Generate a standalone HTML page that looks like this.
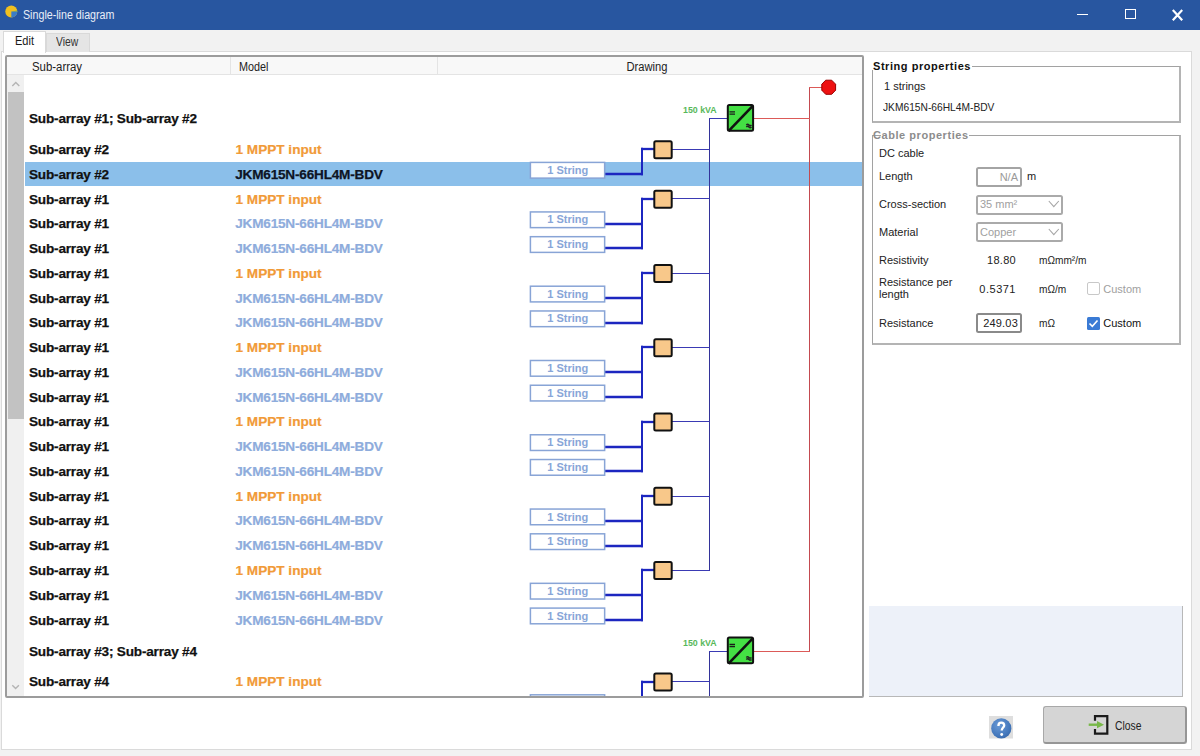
<!DOCTYPE html><html><head><meta charset="utf-8"><style>
html,body{margin:0;padding:0;}
body{width:1200px;height:756px;overflow:hidden;background:#f2f2f2;position:relative;font-family:"Liberation Sans", sans-serif;}
.t{position:absolute;white-space:nowrap;}
.a{position:absolute;box-sizing:border-box;}
</style></head><body>
<div class="a" style="left:0;top:0;width:1200px;height:30px;background:#2856a0;"></div>
<svg class="a" style="left:0;top:0" width="24" height="24" viewBox="0 0 24 24">
<circle cx="11.3" cy="11.5" r="6" fill="#f0c020"/>
<path d="M11.3 11.5 L17.3 11.5 A6 6 0 0 1 11.3 17.5 Z" fill="#3a7cc8"/>
<path d="M11.3 11.5 L17.3 10.5 L17.3 11.5 Z" fill="#5aa070"/>
</svg>
<div class="t" style="left:23.00px;top:9.24px;font-size:12px;line-height:12px;color:#e8eef8;font-weight:normal;transform:scaleX(0.89);transform-origin:0 0;">Single-line diagram</div>
<div class="a" style="left:1077px;top:14px;width:11px;height:1px;background:#fff;"></div>
<div class="a" style="left:1125px;top:9.3px;width:10.8px;height:10.2px;border:1.2px solid #fff;"></div>
<svg class="a" style="left:1170px;top:7px" width="16" height="16" viewBox="0 0 16 16"><path d="M2.8 3 L12.2 13.2 M12.2 3 L2.8 13.2" stroke="#fff" stroke-width="2.2"/></svg>
<div class="a" style="left:1px;top:51px;width:1191px;height:699px;background:#fff;border:1px solid #dadada;"></div>
<div class="a" style="left:46px;top:33px;width:44px;height:19px;background:#e5e5e5;border:1px solid #d9d9d9;border-bottom:none;"></div>
<div class="a" style="left:3px;top:31px;width:43px;height:22px;background:#fff;border:1px solid #d9d9d9;border-bottom:none;"></div>
<div class="t" style="left:14.80px;top:34.84px;font-size:12px;line-height:12px;color:#1a1a1a;font-weight:normal;transform:scaleX(0.92);transform-origin:0 0;">Edit</div>
<div class="t" style="left:56.20px;top:35.64px;font-size:12px;line-height:12px;color:#333;font-weight:normal;transform:scaleX(0.86);transform-origin:0 0;">View</div>
<div class="a" style="left:5px;top:55px;width:859px;height:643px;border:2px solid #9c9c9c;border-radius:2px;background:#fff;"></div>
<div class="a" style="left:7px;top:57px;width:855px;height:18px;background:#f8f8f8;border-bottom:1px solid #e4e4e4;"></div>
<div class="a" style="left:230px;top:57px;width:1px;height:17px;background:#e4e4e4;"></div>
<div class="a" style="left:437px;top:57px;width:1px;height:17px;background:#e4e4e4;"></div>
<div class="t" style="left:32.20px;top:61.04px;font-size:12px;line-height:12px;color:#222;font-weight:normal;transform:scaleX(0.95);transform-origin:0 0;">Sub-array</div>
<div class="t" style="left:238.60px;top:61.04px;font-size:12px;line-height:12px;color:#222;font-weight:normal;transform:scaleX(0.9);transform-origin:0 0;">Model</div>
<div class="t" style="left:446.60px;width:400px;text-align:center;top:61.04px;font-size:12px;line-height:12px;color:#222;font-weight:normal;transform:scaleX(0.93);transform-origin:200px 0;">Drawing</div>
<div class="a" style="left:7px;top:75px;width:17px;height:621px;background:#f0f0f0;"></div>
<div class="a" style="left:8px;top:92px;width:16px;height:327px;background:#c2c2c2;"></div>
<svg class="a" style="left:0px;top:0px" width="30" height="756"><path d="M12.3 86 L15.8 82.6 L19.3 86" stroke="#b4b4b4" stroke-width="1.4" fill="none"/><path d="M12.3 685.2 L15.6 688.6 L18.9 685.2" stroke="#b4b4b4" stroke-width="1.4" fill="none"/></svg>
<div class="a" style="left:25px;top:162px;width:837px;height:24px;background:#8bbfea;"></div>
<div class="t" style="left:29.00px;top:112.39px;font-size:13.6px;line-height:13.6px;color:#111;font-weight:bold;letter-spacing:-0.2px;-webkit-text-stroke:0.25px #111;">Sub-array #1; Sub-array #2</div>
<div class="t" style="left:29.00px;top:143.09px;font-size:13.6px;line-height:13.6px;color:#111;font-weight:bold;letter-spacing:-0.2px;-webkit-text-stroke:0.25px #111;">Sub-array #2</div>
<div class="t" style="left:235.50px;top:143.09px;font-size:13.6px;line-height:13.6px;color:#f19a38;font-weight:bold;letter-spacing:0px;-webkit-text-stroke:0.2px #f19a38;">1 MPPT input</div>
<div class="t" style="left:29.00px;top:167.85px;font-size:13.6px;line-height:13.6px;color:#111;font-weight:bold;letter-spacing:-0.2px;-webkit-text-stroke:0.25px #111;">Sub-array #2</div>
<div class="t" style="left:235.20px;top:167.85px;font-size:13.6px;line-height:13.6px;color:#0d1424;font-weight:bold;letter-spacing:-0.2px;-webkit-text-stroke:0.25px #0d1424;">JKM615N-66HL4M-BDV</div>
<div class="t" style="left:29.00px;top:192.61px;font-size:13.6px;line-height:13.6px;color:#111;font-weight:bold;letter-spacing:-0.2px;-webkit-text-stroke:0.25px #111;">Sub-array #1</div>
<div class="t" style="left:235.50px;top:192.61px;font-size:13.6px;line-height:13.6px;color:#f19a38;font-weight:bold;letter-spacing:0px;-webkit-text-stroke:0.2px #f19a38;">1 MPPT input</div>
<div class="t" style="left:29.00px;top:217.37px;font-size:13.6px;line-height:13.6px;color:#111;font-weight:bold;letter-spacing:-0.2px;-webkit-text-stroke:0.25px #111;">Sub-array #1</div>
<div class="t" style="left:235.20px;top:217.37px;font-size:13.6px;line-height:13.6px;color:#8eacdc;font-weight:bold;letter-spacing:-0.2px;-webkit-text-stroke:0.2px #8eacdc;">JKM615N-66HL4M-BDV</div>
<div class="t" style="left:29.00px;top:242.13px;font-size:13.6px;line-height:13.6px;color:#111;font-weight:bold;letter-spacing:-0.2px;-webkit-text-stroke:0.25px #111;">Sub-array #1</div>
<div class="t" style="left:235.20px;top:242.13px;font-size:13.6px;line-height:13.6px;color:#8eacdc;font-weight:bold;letter-spacing:-0.2px;-webkit-text-stroke:0.2px #8eacdc;">JKM615N-66HL4M-BDV</div>
<div class="t" style="left:29.00px;top:266.89px;font-size:13.6px;line-height:13.6px;color:#111;font-weight:bold;letter-spacing:-0.2px;-webkit-text-stroke:0.25px #111;">Sub-array #1</div>
<div class="t" style="left:235.50px;top:266.89px;font-size:13.6px;line-height:13.6px;color:#f19a38;font-weight:bold;letter-spacing:0px;-webkit-text-stroke:0.2px #f19a38;">1 MPPT input</div>
<div class="t" style="left:29.00px;top:291.65px;font-size:13.6px;line-height:13.6px;color:#111;font-weight:bold;letter-spacing:-0.2px;-webkit-text-stroke:0.25px #111;">Sub-array #1</div>
<div class="t" style="left:235.20px;top:291.65px;font-size:13.6px;line-height:13.6px;color:#8eacdc;font-weight:bold;letter-spacing:-0.2px;-webkit-text-stroke:0.2px #8eacdc;">JKM615N-66HL4M-BDV</div>
<div class="t" style="left:29.00px;top:316.41px;font-size:13.6px;line-height:13.6px;color:#111;font-weight:bold;letter-spacing:-0.2px;-webkit-text-stroke:0.25px #111;">Sub-array #1</div>
<div class="t" style="left:235.20px;top:316.41px;font-size:13.6px;line-height:13.6px;color:#8eacdc;font-weight:bold;letter-spacing:-0.2px;-webkit-text-stroke:0.2px #8eacdc;">JKM615N-66HL4M-BDV</div>
<div class="t" style="left:29.00px;top:341.17px;font-size:13.6px;line-height:13.6px;color:#111;font-weight:bold;letter-spacing:-0.2px;-webkit-text-stroke:0.25px #111;">Sub-array #1</div>
<div class="t" style="left:235.50px;top:341.17px;font-size:13.6px;line-height:13.6px;color:#f19a38;font-weight:bold;letter-spacing:0px;-webkit-text-stroke:0.2px #f19a38;">1 MPPT input</div>
<div class="t" style="left:29.00px;top:365.93px;font-size:13.6px;line-height:13.6px;color:#111;font-weight:bold;letter-spacing:-0.2px;-webkit-text-stroke:0.25px #111;">Sub-array #1</div>
<div class="t" style="left:235.20px;top:365.93px;font-size:13.6px;line-height:13.6px;color:#8eacdc;font-weight:bold;letter-spacing:-0.2px;-webkit-text-stroke:0.2px #8eacdc;">JKM615N-66HL4M-BDV</div>
<div class="t" style="left:29.00px;top:390.69px;font-size:13.6px;line-height:13.6px;color:#111;font-weight:bold;letter-spacing:-0.2px;-webkit-text-stroke:0.25px #111;">Sub-array #1</div>
<div class="t" style="left:235.20px;top:390.69px;font-size:13.6px;line-height:13.6px;color:#8eacdc;font-weight:bold;letter-spacing:-0.2px;-webkit-text-stroke:0.2px #8eacdc;">JKM615N-66HL4M-BDV</div>
<div class="t" style="left:29.00px;top:415.45px;font-size:13.6px;line-height:13.6px;color:#111;font-weight:bold;letter-spacing:-0.2px;-webkit-text-stroke:0.25px #111;">Sub-array #1</div>
<div class="t" style="left:235.50px;top:415.45px;font-size:13.6px;line-height:13.6px;color:#f19a38;font-weight:bold;letter-spacing:0px;-webkit-text-stroke:0.2px #f19a38;">1 MPPT input</div>
<div class="t" style="left:29.00px;top:440.21px;font-size:13.6px;line-height:13.6px;color:#111;font-weight:bold;letter-spacing:-0.2px;-webkit-text-stroke:0.25px #111;">Sub-array #1</div>
<div class="t" style="left:235.20px;top:440.21px;font-size:13.6px;line-height:13.6px;color:#8eacdc;font-weight:bold;letter-spacing:-0.2px;-webkit-text-stroke:0.2px #8eacdc;">JKM615N-66HL4M-BDV</div>
<div class="t" style="left:29.00px;top:464.97px;font-size:13.6px;line-height:13.6px;color:#111;font-weight:bold;letter-spacing:-0.2px;-webkit-text-stroke:0.25px #111;">Sub-array #1</div>
<div class="t" style="left:235.20px;top:464.97px;font-size:13.6px;line-height:13.6px;color:#8eacdc;font-weight:bold;letter-spacing:-0.2px;-webkit-text-stroke:0.2px #8eacdc;">JKM615N-66HL4M-BDV</div>
<div class="t" style="left:29.00px;top:489.73px;font-size:13.6px;line-height:13.6px;color:#111;font-weight:bold;letter-spacing:-0.2px;-webkit-text-stroke:0.25px #111;">Sub-array #1</div>
<div class="t" style="left:235.50px;top:489.73px;font-size:13.6px;line-height:13.6px;color:#f19a38;font-weight:bold;letter-spacing:0px;-webkit-text-stroke:0.2px #f19a38;">1 MPPT input</div>
<div class="t" style="left:29.00px;top:514.49px;font-size:13.6px;line-height:13.6px;color:#111;font-weight:bold;letter-spacing:-0.2px;-webkit-text-stroke:0.25px #111;">Sub-array #1</div>
<div class="t" style="left:235.20px;top:514.49px;font-size:13.6px;line-height:13.6px;color:#8eacdc;font-weight:bold;letter-spacing:-0.2px;-webkit-text-stroke:0.2px #8eacdc;">JKM615N-66HL4M-BDV</div>
<div class="t" style="left:29.00px;top:539.25px;font-size:13.6px;line-height:13.6px;color:#111;font-weight:bold;letter-spacing:-0.2px;-webkit-text-stroke:0.25px #111;">Sub-array #1</div>
<div class="t" style="left:235.20px;top:539.25px;font-size:13.6px;line-height:13.6px;color:#8eacdc;font-weight:bold;letter-spacing:-0.2px;-webkit-text-stroke:0.2px #8eacdc;">JKM615N-66HL4M-BDV</div>
<div class="t" style="left:29.00px;top:564.01px;font-size:13.6px;line-height:13.6px;color:#111;font-weight:bold;letter-spacing:-0.2px;-webkit-text-stroke:0.25px #111;">Sub-array #1</div>
<div class="t" style="left:235.50px;top:564.01px;font-size:13.6px;line-height:13.6px;color:#f19a38;font-weight:bold;letter-spacing:0px;-webkit-text-stroke:0.2px #f19a38;">1 MPPT input</div>
<div class="t" style="left:29.00px;top:588.77px;font-size:13.6px;line-height:13.6px;color:#111;font-weight:bold;letter-spacing:-0.2px;-webkit-text-stroke:0.25px #111;">Sub-array #1</div>
<div class="t" style="left:235.20px;top:588.77px;font-size:13.6px;line-height:13.6px;color:#8eacdc;font-weight:bold;letter-spacing:-0.2px;-webkit-text-stroke:0.2px #8eacdc;">JKM615N-66HL4M-BDV</div>
<div class="t" style="left:29.00px;top:613.53px;font-size:13.6px;line-height:13.6px;color:#111;font-weight:bold;letter-spacing:-0.2px;-webkit-text-stroke:0.25px #111;">Sub-array #1</div>
<div class="t" style="left:235.20px;top:613.53px;font-size:13.6px;line-height:13.6px;color:#8eacdc;font-weight:bold;letter-spacing:-0.2px;-webkit-text-stroke:0.2px #8eacdc;">JKM615N-66HL4M-BDV</div>
<div class="t" style="left:29.00px;top:644.79px;font-size:13.6px;line-height:13.6px;color:#111;font-weight:bold;letter-spacing:-0.2px;-webkit-text-stroke:0.25px #111;">Sub-array #3; Sub-array #4</div>
<div class="t" style="left:29.00px;top:675.49px;font-size:13.6px;line-height:13.6px;color:#111;font-weight:bold;letter-spacing:-0.2px;-webkit-text-stroke:0.25px #111;">Sub-array #4</div>
<div class="t" style="left:235.50px;top:675.49px;font-size:13.6px;line-height:13.6px;color:#f19a38;font-weight:bold;letter-spacing:0px;-webkit-text-stroke:0.2px #f19a38;">1 MPPT input</div>
<div class="a" style="left:7px;top:75px;width:855px;height:621px;overflow:hidden;">
<svg width="1200" height="756" style="position:absolute;left:-7px;top:-75px"><line x1="709.5" y1="118.5" x2="709.5" y2="571.0" stroke="#33339a" stroke-width="1"/><line x1="709" y1="118.5" x2="728" y2="118.5" stroke="#3a3ab4" stroke-width="1"/><line x1="809.5" y1="87.5" x2="809.5" y2="652.0" stroke="#c44a50" stroke-width="1"/><line x1="753" y1="118.5" x2="810" y2="118.5" stroke="#dc5a58" stroke-width="1"/><line x1="753" y1="651.5" x2="810" y2="651.5" stroke="#dc5a58" stroke-width="1"/><line x1="809" y1="87.5" x2="823" y2="87.5" stroke="#dc5a58" stroke-width="1"/><line x1="672" y1="149.5" x2="709.5" y2="149.5" stroke="#3a3ab4" stroke-width="1"/><line x1="641" y1="149" x2="655" y2="149" stroke="#1c26c0" stroke-width="2.3"/><line x1="642" y1="147.85" x2="642" y2="175.15" stroke="#1c26c0" stroke-width="2"/><line x1="604" y1="174" x2="643" y2="174" stroke="#1c26c0" stroke-width="2.3"/><rect x="530.4" y="162.41" width="74.25" height="15.7" fill="#fff" stroke="#88a4d6" stroke-width="1.5"/><text x="567.7" y="173.86" text-anchor="middle" font-family="Liberation Sans" font-weight="bold" font-size="11" fill="#88a6d8">1 String</text><rect x="654.3" y="141.20" width="17.4" height="17" rx="1.5" fill="#f8c88a" stroke="#111" stroke-width="2"/><line x1="672" y1="198.5" x2="709.5" y2="198.5" stroke="#3a3ab4" stroke-width="1"/><line x1="641" y1="199" x2="655" y2="199" stroke="#1c26c0" stroke-width="2.3"/><line x1="642" y1="197.85" x2="642" y2="249.15" stroke="#1c26c0" stroke-width="2"/><line x1="604" y1="224" x2="643" y2="224" stroke="#1c26c0" stroke-width="2.3"/><rect x="530.4" y="211.93" width="74.25" height="15.7" fill="#fff" stroke="#88a4d6" stroke-width="1.5"/><text x="567.7" y="223.38" text-anchor="middle" font-family="Liberation Sans" font-weight="bold" font-size="11" fill="#88a6d8">1 String</text><line x1="604" y1="248" x2="643" y2="248" stroke="#1c26c0" stroke-width="2.3"/><rect x="530.4" y="236.69" width="74.25" height="15.7" fill="#fff" stroke="#88a4d6" stroke-width="1.5"/><text x="567.7" y="248.14" text-anchor="middle" font-family="Liberation Sans" font-weight="bold" font-size="11" fill="#88a6d8">1 String</text><rect x="654.3" y="190.72" width="17.4" height="17" rx="1.5" fill="#f8c88a" stroke="#111" stroke-width="2"/><line x1="672" y1="273.5" x2="709.5" y2="273.5" stroke="#3a3ab4" stroke-width="1"/><line x1="641" y1="273" x2="655" y2="273" stroke="#1c26c0" stroke-width="2.3"/><line x1="642" y1="271.85" x2="642" y2="324.15" stroke="#1c26c0" stroke-width="2"/><line x1="604" y1="298" x2="643" y2="298" stroke="#1c26c0" stroke-width="2.3"/><rect x="530.4" y="286.21" width="74.25" height="15.7" fill="#fff" stroke="#88a4d6" stroke-width="1.5"/><text x="567.7" y="297.66" text-anchor="middle" font-family="Liberation Sans" font-weight="bold" font-size="11" fill="#88a6d8">1 String</text><line x1="604" y1="323" x2="643" y2="323" stroke="#1c26c0" stroke-width="2.3"/><rect x="530.4" y="310.97" width="74.25" height="15.7" fill="#fff" stroke="#88a4d6" stroke-width="1.5"/><text x="567.7" y="322.42" text-anchor="middle" font-family="Liberation Sans" font-weight="bold" font-size="11" fill="#88a6d8">1 String</text><rect x="654.3" y="265.00" width="17.4" height="17" rx="1.5" fill="#f8c88a" stroke="#111" stroke-width="2"/><line x1="672" y1="347.5" x2="709.5" y2="347.5" stroke="#3a3ab4" stroke-width="1"/><line x1="641" y1="347" x2="655" y2="347" stroke="#1c26c0" stroke-width="2.3"/><line x1="642" y1="345.85" x2="642" y2="398.15" stroke="#1c26c0" stroke-width="2"/><line x1="604" y1="372" x2="643" y2="372" stroke="#1c26c0" stroke-width="2.3"/><rect x="530.4" y="360.49" width="74.25" height="15.7" fill="#fff" stroke="#88a4d6" stroke-width="1.5"/><text x="567.7" y="371.94" text-anchor="middle" font-family="Liberation Sans" font-weight="bold" font-size="11" fill="#88a6d8">1 String</text><line x1="604" y1="397" x2="643" y2="397" stroke="#1c26c0" stroke-width="2.3"/><rect x="530.4" y="385.25" width="74.25" height="15.7" fill="#fff" stroke="#88a4d6" stroke-width="1.5"/><text x="567.7" y="396.70" text-anchor="middle" font-family="Liberation Sans" font-weight="bold" font-size="11" fill="#88a6d8">1 String</text><rect x="654.3" y="339.28" width="17.4" height="17" rx="1.5" fill="#f8c88a" stroke="#111" stroke-width="2"/><line x1="672" y1="421.5" x2="709.5" y2="421.5" stroke="#3a3ab4" stroke-width="1"/><line x1="641" y1="422" x2="655" y2="422" stroke="#1c26c0" stroke-width="2.3"/><line x1="642" y1="420.85" x2="642" y2="472.15" stroke="#1c26c0" stroke-width="2"/><line x1="604" y1="447" x2="643" y2="447" stroke="#1c26c0" stroke-width="2.3"/><rect x="530.4" y="434.77" width="74.25" height="15.7" fill="#fff" stroke="#88a4d6" stroke-width="1.5"/><text x="567.7" y="446.22" text-anchor="middle" font-family="Liberation Sans" font-weight="bold" font-size="11" fill="#88a6d8">1 String</text><line x1="604" y1="471" x2="643" y2="471" stroke="#1c26c0" stroke-width="2.3"/><rect x="530.4" y="459.53" width="74.25" height="15.7" fill="#fff" stroke="#88a4d6" stroke-width="1.5"/><text x="567.7" y="470.98" text-anchor="middle" font-family="Liberation Sans" font-weight="bold" font-size="11" fill="#88a6d8">1 String</text><rect x="654.3" y="413.56" width="17.4" height="17" rx="1.5" fill="#f8c88a" stroke="#111" stroke-width="2"/><line x1="672" y1="496.5" x2="709.5" y2="496.5" stroke="#3a3ab4" stroke-width="1"/><line x1="641" y1="496" x2="655" y2="496" stroke="#1c26c0" stroke-width="2.3"/><line x1="642" y1="494.85" x2="642" y2="547.15" stroke="#1c26c0" stroke-width="2"/><line x1="604" y1="521" x2="643" y2="521" stroke="#1c26c0" stroke-width="2.3"/><rect x="530.4" y="509.05" width="74.25" height="15.7" fill="#fff" stroke="#88a4d6" stroke-width="1.5"/><text x="567.7" y="520.50" text-anchor="middle" font-family="Liberation Sans" font-weight="bold" font-size="11" fill="#88a6d8">1 String</text><line x1="604" y1="546" x2="643" y2="546" stroke="#1c26c0" stroke-width="2.3"/><rect x="530.4" y="533.81" width="74.25" height="15.7" fill="#fff" stroke="#88a4d6" stroke-width="1.5"/><text x="567.7" y="545.26" text-anchor="middle" font-family="Liberation Sans" font-weight="bold" font-size="11" fill="#88a6d8">1 String</text><rect x="654.3" y="487.84" width="17.4" height="17" rx="1.5" fill="#f8c88a" stroke="#111" stroke-width="2"/><line x1="672" y1="570.5" x2="709.5" y2="570.5" stroke="#3a3ab4" stroke-width="1"/><line x1="641" y1="570" x2="655" y2="570" stroke="#1c26c0" stroke-width="2.3"/><line x1="642" y1="568.85" x2="642" y2="621.15" stroke="#1c26c0" stroke-width="2"/><line x1="604" y1="595" x2="643" y2="595" stroke="#1c26c0" stroke-width="2.3"/><rect x="530.4" y="583.33" width="74.25" height="15.7" fill="#fff" stroke="#88a4d6" stroke-width="1.5"/><text x="567.7" y="594.78" text-anchor="middle" font-family="Liberation Sans" font-weight="bold" font-size="11" fill="#88a6d8">1 String</text><line x1="604" y1="620" x2="643" y2="620" stroke="#1c26c0" stroke-width="2.3"/><rect x="530.4" y="608.09" width="74.25" height="15.7" fill="#fff" stroke="#88a4d6" stroke-width="1.5"/><text x="567.7" y="619.54" text-anchor="middle" font-family="Liberation Sans" font-weight="bold" font-size="11" fill="#88a6d8">1 String</text><rect x="654.3" y="562.12" width="17.4" height="17" rx="1.5" fill="#f8c88a" stroke="#111" stroke-width="2"/><rect x="727.8" y="105.00" width="25.3" height="25.8" rx="1.5" fill="#44e044" stroke="#111" stroke-width="2"/><line x1="728.5" y1="131.20" x2="753" y2="105.70" stroke="#111" stroke-width="2.6"/><path d="M729.5 111.90 h5.5 M729.5 114.10 h5.5" stroke="#1a1a1a" stroke-width="1.3"/><path d="M746.3 125.00 q1.3 -1.4 2.6 0 q1.3 1.4 2.6 0 M746.3 127.00 q1.3 -1.4 2.6 0 q1.3 1.4 2.6 0" stroke="#222" stroke-width="1.4" fill="none"/><text x="683" y="113.10" font-family="Liberation Sans" font-weight="bold" font-size="9.4" fill="#58b85a" textLength="33.7" lengthAdjust="spacingAndGlyphs">150 kVA</text><line x1="709.5" y1="651.5" x2="709.5" y2="700" stroke="#33339a" stroke-width="1"/><line x1="709" y1="651.5" x2="728" y2="651.5" stroke="#3a3ab4" stroke-width="1"/><line x1="672" y1="681.5" x2="709.5" y2="681.5" stroke="#3a3ab4" stroke-width="1"/><line x1="641" y1="682" x2="655" y2="682" stroke="#1c26c0" stroke-width="2.3"/><line x1="642" y1="680.85" x2="642" y2="700" stroke="#1c26c0" stroke-width="2"/><rect x="530.4" y="694.81" width="74.25" height="15.7" fill="#fff" stroke="#88a4d6" stroke-width="1.5"/><rect x="654.3" y="673.60" width="17.4" height="17" rx="1.5" fill="#f8c88a" stroke="#111" stroke-width="2"/><rect x="727.8" y="637.40" width="25.3" height="25.8" rx="1.5" fill="#44e044" stroke="#111" stroke-width="2"/><line x1="728.5" y1="663.60" x2="753" y2="638.10" stroke="#111" stroke-width="2.6"/><path d="M729.5 644.30 h5.5 M729.5 646.50 h5.5" stroke="#1a1a1a" stroke-width="1.3"/><path d="M746.3 657.40 q1.3 -1.4 2.6 0 q1.3 1.4 2.6 0 M746.3 659.40 q1.3 -1.4 2.6 0 q1.3 1.4 2.6 0" stroke="#222" stroke-width="1.4" fill="none"/><text x="683" y="645.50" font-family="Liberation Sans" font-weight="bold" font-size="9.4" fill="#58b85a" textLength="33.7" lengthAdjust="spacingAndGlyphs">150 kVA</text><polygon points="825.7,80.2 831.7,80.2 835.6,84.2 835.6,90.2 831.7,94.3 825.7,94.3 821.8,90.2 821.8,84.2" fill="#ee1111" stroke="#900" stroke-width="1"/></svg>
</div>
<div class="a" style="left:872px;top:66px;width:308.5px;height:57px;border:1px solid #a2a2a2;border-right:2px solid #b4b4b4;border-bottom:2px solid #b4b4b4;"></div>
<div class="a" style="left:871px;top:58px;width:101px;height:12px;background:#fff;"></div>
<div class="t" style="left:873.00px;top:61.29px;font-size:11px;line-height:11px;color:#111;font-weight:bold;letter-spacing:0.55px;">String properties</div>
<div class="t" style="left:884.00px;top:81.29px;font-size:11px;line-height:11px;color:#222;font-weight:normal;">1 strings</div>
<div class="t" style="left:883.00px;top:102.09px;font-size:11px;line-height:11px;color:#222;font-weight:normal;transform:scaleX(0.93);transform-origin:0 0;">JKM615N-66HL4M-BDV</div>
<div class="a" style="left:872px;top:135px;width:308.5px;height:209.5px;border:1px solid #a2a2a2;border-right:2px solid #b4b4b4;border-bottom:2px solid #b4b4b4;"></div>
<div class="a" style="left:881px;top:128px;width:88px;height:12px;background:#fff;"></div>
<div class="t" style="left:873.00px;top:130.09px;font-size:11px;line-height:11px;color:#8c8c8c;font-weight:bold;letter-spacing:0.55px;">Cable properties</div>
<div class="t" style="left:879.00px;top:148.29px;font-size:11px;line-height:11px;color:#222;font-weight:normal;">DC cable</div>
<div class="t" style="left:879.00px;top:170.99px;font-size:11px;line-height:11px;color:#222;font-weight:normal;">Length</div>
<div class="a" style="left:976px;top:166.5px;width:45.5px;height:20px;border:2px solid #a4a4a4;border-radius:2.5px;background:#fff;"></div>
<div class="t" style="right:182.00px;top:171.79px;font-size:11px;line-height:11px;color:#9a9a9a;font-weight:normal;">N/A</div>
<div class="t" style="left:1027.00px;top:171.29px;font-size:11px;line-height:11px;color:#222;font-weight:normal;">m</div>
<div class="t" style="left:879.00px;top:198.79px;font-size:11px;line-height:11px;color:#222;font-weight:normal;">Cross-section</div>
<div class="a" style="left:976px;top:194.5px;width:87px;height:20.4px;border:2px solid #aaaaaa;border-radius:2.5px;background:#fff;"></div>
<div class="t" style="left:980.00px;top:199.29px;font-size:11px;line-height:11px;color:#a0a0a0;font-weight:normal;">35 mm²</div>
<svg class="a" style="left:1045px;top:198px" width="16" height="12"><path d="M3.8 3 L8.8 8.6 L13.8 3" stroke="#a6a6a6" stroke-width="1.1" fill="none"/></svg>
<div class="t" style="left:879.00px;top:226.59px;font-size:11px;line-height:11px;color:#222;font-weight:normal;">Material</div>
<div class="a" style="left:976px;top:222px;width:87px;height:20.3px;border:2px solid #aaaaaa;border-radius:2.5px;background:#fff;"></div>
<div class="t" style="left:980.00px;top:227.29px;font-size:11px;line-height:11px;color:#a0a0a0;font-weight:normal;">Copper</div>
<svg class="a" style="left:1045px;top:226px" width="16" height="12"><path d="M3.8 3 L8.8 8.6 L13.8 3" stroke="#a6a6a6" stroke-width="1.1" fill="none"/></svg>
<div class="t" style="left:879.00px;top:254.89px;font-size:11px;line-height:11px;color:#222;font-weight:normal;">Resistivity</div>
<div class="t" style="right:184.00px;top:254.89px;font-size:11px;line-height:11px;color:#222;font-weight:normal;letter-spacing:0.3px;">18.80</div>
<div class="t" style="left:1039.00px;top:254.89px;font-size:11px;line-height:11px;color:#222;font-weight:normal;transform:scaleX(0.92);transform-origin:0 0;">mΩmm²/m</div>
<div class="t" style="left:879.00px;top:277.09px;font-size:11px;line-height:11px;color:#222;font-weight:normal;">Resistance per</div>
<div class="t" style="left:879.00px;top:289.29px;font-size:11px;line-height:11px;color:#222;font-weight:normal;">length</div>
<div class="t" style="right:184.00px;top:284.09px;font-size:11px;line-height:11px;color:#222;font-weight:normal;letter-spacing:0.5px;">0.5371</div>
<div class="t" style="left:1039.00px;top:284.09px;font-size:11px;line-height:11px;color:#222;font-weight:normal;transform:scaleX(0.92);transform-origin:0 0;">mΩ/m</div>
<div class="a" style="left:1087px;top:282px;width:13px;height:13px;border:1px solid #c8c8c8;border-radius:2px;background:#fff;"></div>
<div class="t" style="left:1103.30px;top:284.29px;font-size:11px;line-height:11px;color:#a0a0a0;font-weight:normal;">Custom</div>
<div class="t" style="left:879.00px;top:317.69px;font-size:11px;line-height:11px;color:#222;font-weight:normal;">Resistance</div>
<div class="a" style="left:976px;top:312.5px;width:45.5px;height:20.5px;border:2px solid #8a8a8a;border-radius:2.5px;background:#fff;"></div>
<div class="t" style="right:182.00px;top:318.09px;font-size:11px;line-height:11px;color:#222;font-weight:normal;letter-spacing:0.2px;">249.03</div>
<div class="t" style="left:1039.00px;top:317.69px;font-size:11px;line-height:11px;color:#222;font-weight:normal;transform:scaleX(0.92);transform-origin:0 0;">mΩ</div>
<svg class="a" style="left:1087px;top:317px" width="13" height="13"><rect x="0" y="0" width="13" height="13" rx="1.5" fill="#3a7bd5"/><path d="M2.5 6.5 L5.3 9.3 L10.5 3.5" stroke="#fff" stroke-width="1.6" fill="none"/></svg>
<div class="t" style="left:1103.30px;top:318.29px;font-size:11px;line-height:11px;color:#111;font-weight:normal;">Custom</div>
<div class="a" style="left:869px;top:606px;width:314px;height:91px;background:#edf1f9;border-right:1px solid #b8b8b8;border-bottom:1px solid #b8b8b8;"></div>
<svg class="a" style="left:989px;top:715.5px" width="24" height="23" viewBox="0 0 24 23">
<rect x="0" y="0" width="24" height="22.5" fill="#dedede"/>
<defs><radialGradient id="hg" cx="0.4" cy="0.35" r="0.75"><stop offset="0" stop-color="#6a9ad6"/><stop offset="0.7" stop-color="#4478bc"/><stop offset="1" stop-color="#3464a6"/></radialGradient></defs>
<circle cx="12.3" cy="12.4" r="10.1" fill="url(#hg)"/>
<path d="M9.4 10 C9.4 7.7 10.8 6.7 12.3 6.7 C14 6.7 15.2 7.8 15.2 9.4 C15.2 11.4 12.7 11.9 12.7 14.6" stroke="#fff" stroke-width="2.3" fill="none"/>
<circle cx="12.7" cy="18.5" r="1.45" fill="#fff"/>
</svg>
<div class="a" style="left:1042.5px;top:705.5px;width:144.5px;height:38.5px;background:#d5d5d5;border:1px solid #a8a8a8;border-right:2px solid #969696;border-bottom:2px solid #969696;border-radius:3px;"></div>
<svg class="a" style="left:1086px;top:713px" width="24" height="24" viewBox="0 0 24 24">
<path d="M9 7.8 V3.1 H21.3 V20.7 H9 V16" stroke="#1a1a1a" stroke-width="2.2" fill="none"/>
<path d="M2.7 11.7 H11.8" stroke="#78b848" stroke-width="2.4"/>
<path d="M11 8.1 L18 11.7 L11 15.2 Z" fill="#78b848"/>
</svg>
<div class="t" style="left:1115.40px;top:720.44px;font-size:12px;line-height:12px;color:#222;font-weight:normal;transform:scaleX(0.86);transform-origin:0 0;">Close</div>
</body></html>
